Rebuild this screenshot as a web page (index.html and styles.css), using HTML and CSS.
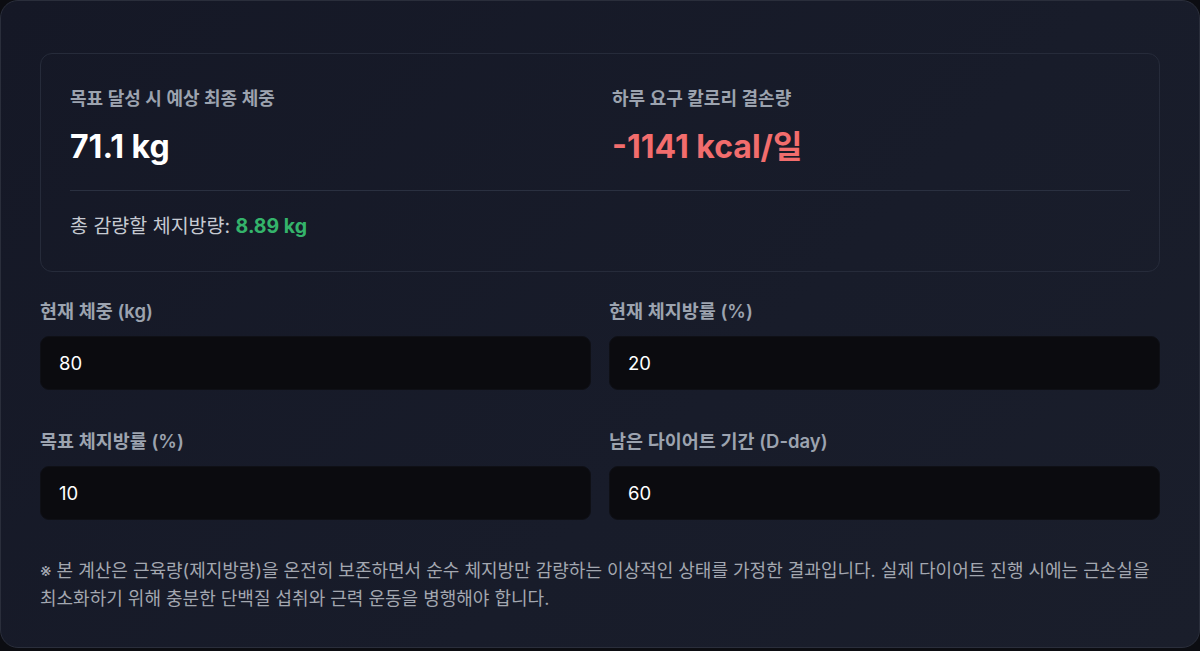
FILE: index.html
```html
<!DOCTYPE html>
<html lang="ko">
<head>
    <meta charset="UTF-8">
    <meta name="viewport" content="width=device-width, initial-scale=1.0">
    <title>체지방 감량 계산기</title>
    <link rel="stylesheet" href="styles.css">
</head>
<body>
    <div class="card">
        <div class="summary">
            <div class="summary-row">
                <div class="stat">
                    <p class="stat-label">목표 달성 시 예상 최종 체중</p>
                    <p class="stat-value">71.1 kg</p>
                </div>
                <div class="stat">
                    <p class="stat-label">하루 요구 칼로리 결손량</p>
                    <p class="stat-value deficit">-1141 kcal/일</p>
                </div>
            </div>
            <div class="summary-total">
                총 감량할 체지방량: <span class="loss">8.89 kg</span>
            </div>
        </div>

        <div class="fields">
            <div class="input-group">
                <label for="weight">현재 체중 (kg)</label>
                <input type="number" id="weight" value="80">
            </div>
            <div class="input-group">
                <label for="bodyfat">현재 체지방률 (%)</label>
                <input type="number" id="bodyfat" value="20">
            </div>
            <div class="input-group">
                <label for="target">목표 체지방률 (%)</label>
                <input type="number" id="target" value="10">
            </div>
            <div class="input-group">
                <label for="days">남은 다이어트 기간 (D-day)</label>
                <input type="number" id="days" value="60">
            </div>
        </div>

        <p class="note">※ 본 계산은 근육량(제지방량)을 온전히 보존하면서 순수 체지방만 감량하는 이상적인 상태를 가정한 결과입니다. 실제 다이어트 진행 시에는 근손실을 최소화하기 위해 충분한 단백질 섭취와 근력 운동을 병행해야 합니다.</p>
    </div>
</body>
</html>
```

FILE: styles.css
```css
* {
    box-sizing: border-box;
}
body {
    font-family: Inter, "Noto Sans CJK KR", sans-serif;
    background: #0c0d12;
    margin: 0;
    color: #e5e7eb;
}
.card {
    min-height: 648px;
    background: linear-gradient(135deg, #151826 0%, #181c2a 60%, #1a1e2b 100%);
    border: 1px solid #2a2e3b;
    border-radius: 18px;
    padding: 52px 39px 30px;
}
.summary {
    border: 1px solid #262b3a;
    border-radius: 12px;
    padding: 34px 29px 32px;
    background: rgba(255, 255, 255, 0.005);
}
.summary-row {
    display: grid;
    grid-template-columns: 1fr 1fr;
    gap: 0 24px;
    padding-bottom: 24px;
    border-bottom: 1px solid #2a3040;
}
.stat p {
    margin: 0;
}
.stat-label {
    font-size: 18px;
    font-weight: 600;
    color: #9ca3af;
    line-height: 22px;
}
.stat-value {
    margin-top: 18px !important;
    font-size: 32px;
    font-weight: 700;
    color: #ffffff;
    line-height: 38px;
}
.stat-value.deficit {
    color: #f26d6d;
}
.summary-total {
    padding-top: 22px;
    font-size: 19.5px;
    color: #c6cad2;
    line-height: 26px;
}
.loss {
    color: #34b36b;
    font-weight: 700;
}
.fields {
    display: grid;
    grid-template-columns: 1fr 1fr;
    gap: 40px 18px;
    margin-top: 28px;
}
.input-group label {
    display: block;
    font-size: 18.5px;
    font-weight: 600;
    color: #9ca3af;
    line-height: 22px;
    margin-bottom: 14px;
}
.input-group input {
    display: block;
    width: 100%;
    height: 54px;
    padding: 0 18px;
    background: #0b0b0f;
    border: 1px solid #0f1016;
    border-radius: 9px;
    color: #ffffff;
    font-family: inherit;
    font-size: 18.5px;
    outline: none;
    -moz-appearance: textfield;
}
.input-group input::-webkit-outer-spin-button,
.input-group input::-webkit-inner-spin-button {
    -webkit-appearance: none;
    margin: 0;
}
.note {
    margin: 37px 0 0;
    font-size: 18px;
    line-height: 28px;
    color: #a3a7b0;
    word-break: keep-all;
}
```
